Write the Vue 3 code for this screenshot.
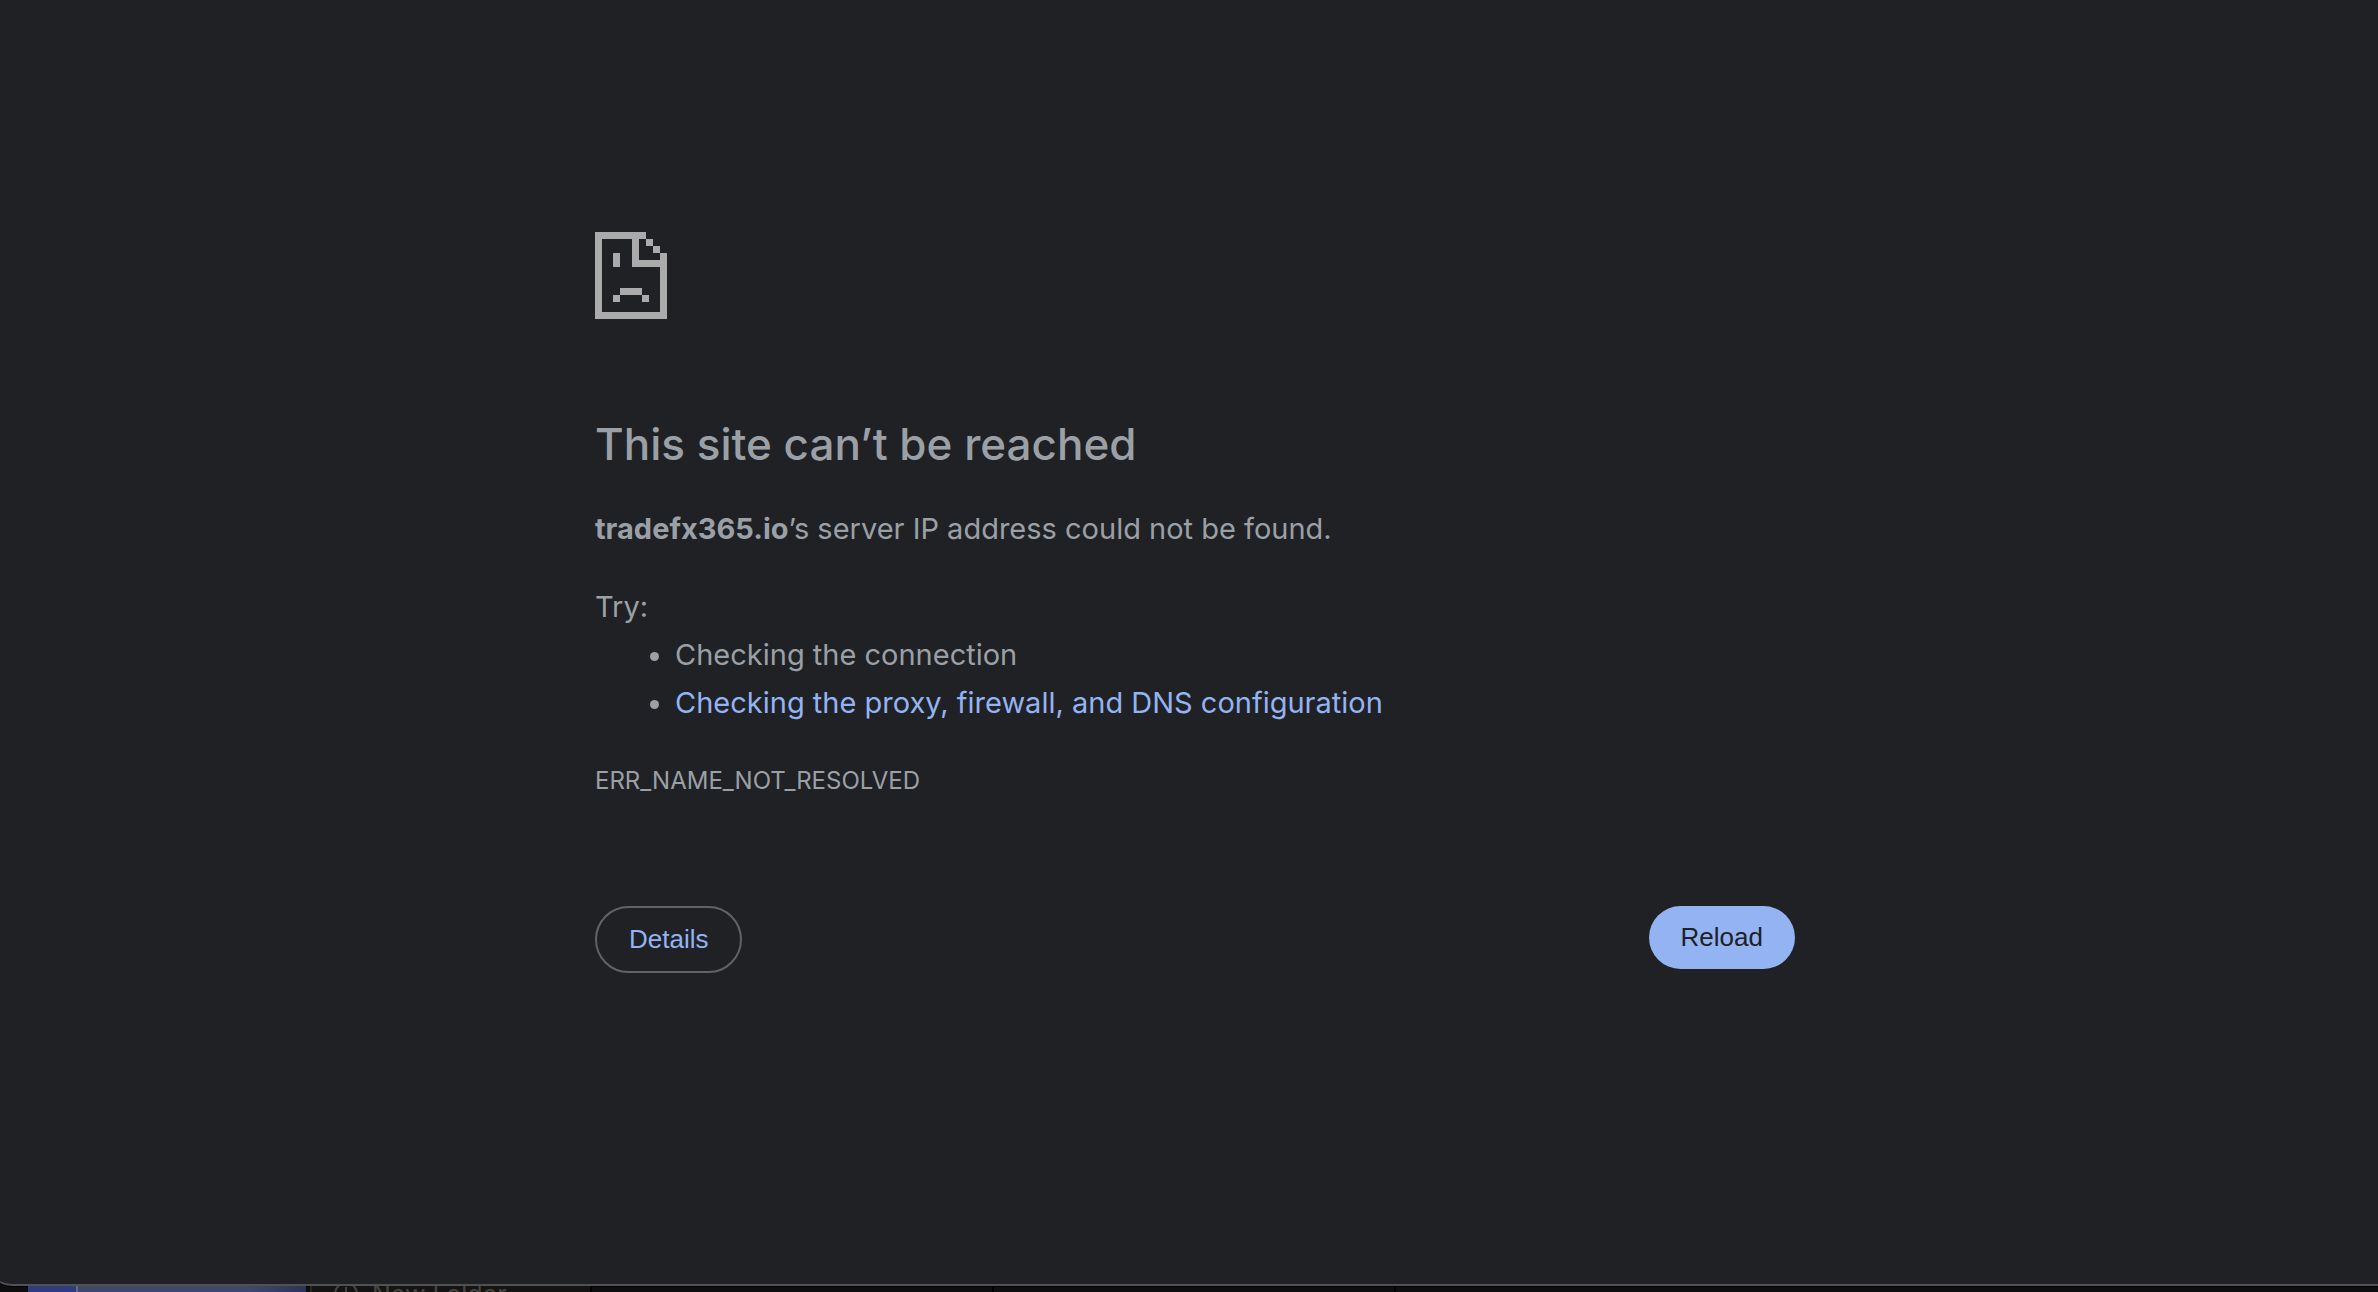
<script setup>
const suggestions = [
  { text: 'Checking the connection' },
  { text: 'Checking the proxy, firewall, and DNS configuration', href: '#buttons' },
]
</script>

<template>
  <div class="screen">
    <main class="window">
      <div class="content">
        <svg class="sad-page" viewBox="0 0 72 87" shape-rendering="crispEdges" aria-hidden="true">
          <path d="M0 0H51V7H44V28H65V21H72V87H0ZM7 7V80H65V35H37V7Z" fill-rule="evenodd" />
          <path d="M51 7h7v7h-7zM58 14h7v7h-7zM18 21h7v14h-7zM25 56h22v7H25zM18 63h7v7h-7zM47 63h7v7h-7z" />
        </svg>
        <h1>This site can’t be reached</h1>
        <p><strong>tradefx365.io</strong>’s server IP address could not be found.</p>
        <div class="try">
          <p>Try:</p>
          <ul>
            <li v-for="item in suggestions" :key="item.text">
              <a v-if="item.href" :href="item.href">{{ item.text }}</a>
              <template v-else>{{ item.text }}</template>
            </li>
          </ul>
        </div>
        <p class="code">ERR_NAME_NOT_RESOLVED</p>
        <div id="buttons" class="buttons">
          <button type="button" class="details">Details</button>
          <button type="button" class="reload">Reload</button>
        </div>
      </div>
    </main>
    <footer class="desktop">
      <div class="preview"><span></span></div>
      <div class="folder">
        <svg viewBox="0 0 24 20" aria-hidden="true">
          <circle cx="12" cy="8" r="11" />
          <path d="M12 1V15M5 8H19" />
        </svg>
        <span>New Folder</span>
      </div>
      <div class="column"></div>
      <div class="column"></div>
    </footer>
  </div>
</template>

<style>
body {
  margin: 0;
  background: #0e0e0e;
}
</style>

<style scoped>
.screen {
  display: flex;
  flex-direction: column;
  height: 100vh;
  overflow: hidden;
  background: #0e0e0e;
  font-family: Inter, "Liberation Sans", sans-serif;
}
.window {
  flex: 1;
  margin: 0 -24px 0 -12px;
  border-bottom: 2px solid #505152;
  border-radius: 0 0 24px 24px;
  box-shadow: 0 1px 0 #000;
  background: #202124;
  color: #9aa0a6;
  font-size: 29px;
  line-height: 48px;
}
.content {
  max-width: 1200px;
  margin: 0 auto;
  padding-top: 232px;
}
.sad-page {
  display: block;
  width: 72px;
  height: 87px;
  fill: #ababab;
}
h1 {
  margin: 97px 0 33px;
  font-size: 44px;
  font-weight: 500;
  line-height: 56px;
}
p {
  margin: 0;
}
.try {
  margin: 30px 0;
}
ul {
  margin: 0;
  padding-left: 80px;
}
a {
  color: #94b3f3;
  text-decoration: none;
}
.code {
  font-size: 24px;
}
.buttons {
  display: flex;
  justify-content: space-between;
  align-items: flex-start;
  margin-top: 101px;
}
button {
  padding: 16px 32px;
  border: 0;
  border-radius: 34px;
  font-family: "Liberation Sans", Arial, sans-serif;
  font-size: 26px;
  line-height: 31px;
}
.details {
  border: 2px solid #5f6368;
  background: transparent;
  color: #94b3f3;
}
.reload {
  background: #94b3f3;
  color: #202124;
}
.desktop {
  display: flex;
  height: 6px;
  overflow: hidden;
}
.preview {
  width: 278px;
  margin-left: 28px;
  background: linear-gradient(90deg, #3f486b 80%, #2d3357);
}
.preview span {
  display: block;
  width: 48px;
  height: 6px;
  border-right: 2px solid #666b80;
  background: #303c80;
}
.folder {
  display: flex;
  align-items: flex-start;
  gap: 14px;
  width: 256px;
  margin-left: 4px;
  padding-left: 22px;
  border-left: 2px solid #292827;
  border-right: 2px solid #000;
  background: #151412;
  color: #454442;
  font-size: 25px;
  line-height: 16px;
}
.folder svg {
  flex: none;
  width: 24px;
  height: 20px;
  fill: none;
  stroke: #454442;
  stroke-width: 2;
}
.column {
  width: 400px;
  border-right: 2px solid #000;
}
</style>
